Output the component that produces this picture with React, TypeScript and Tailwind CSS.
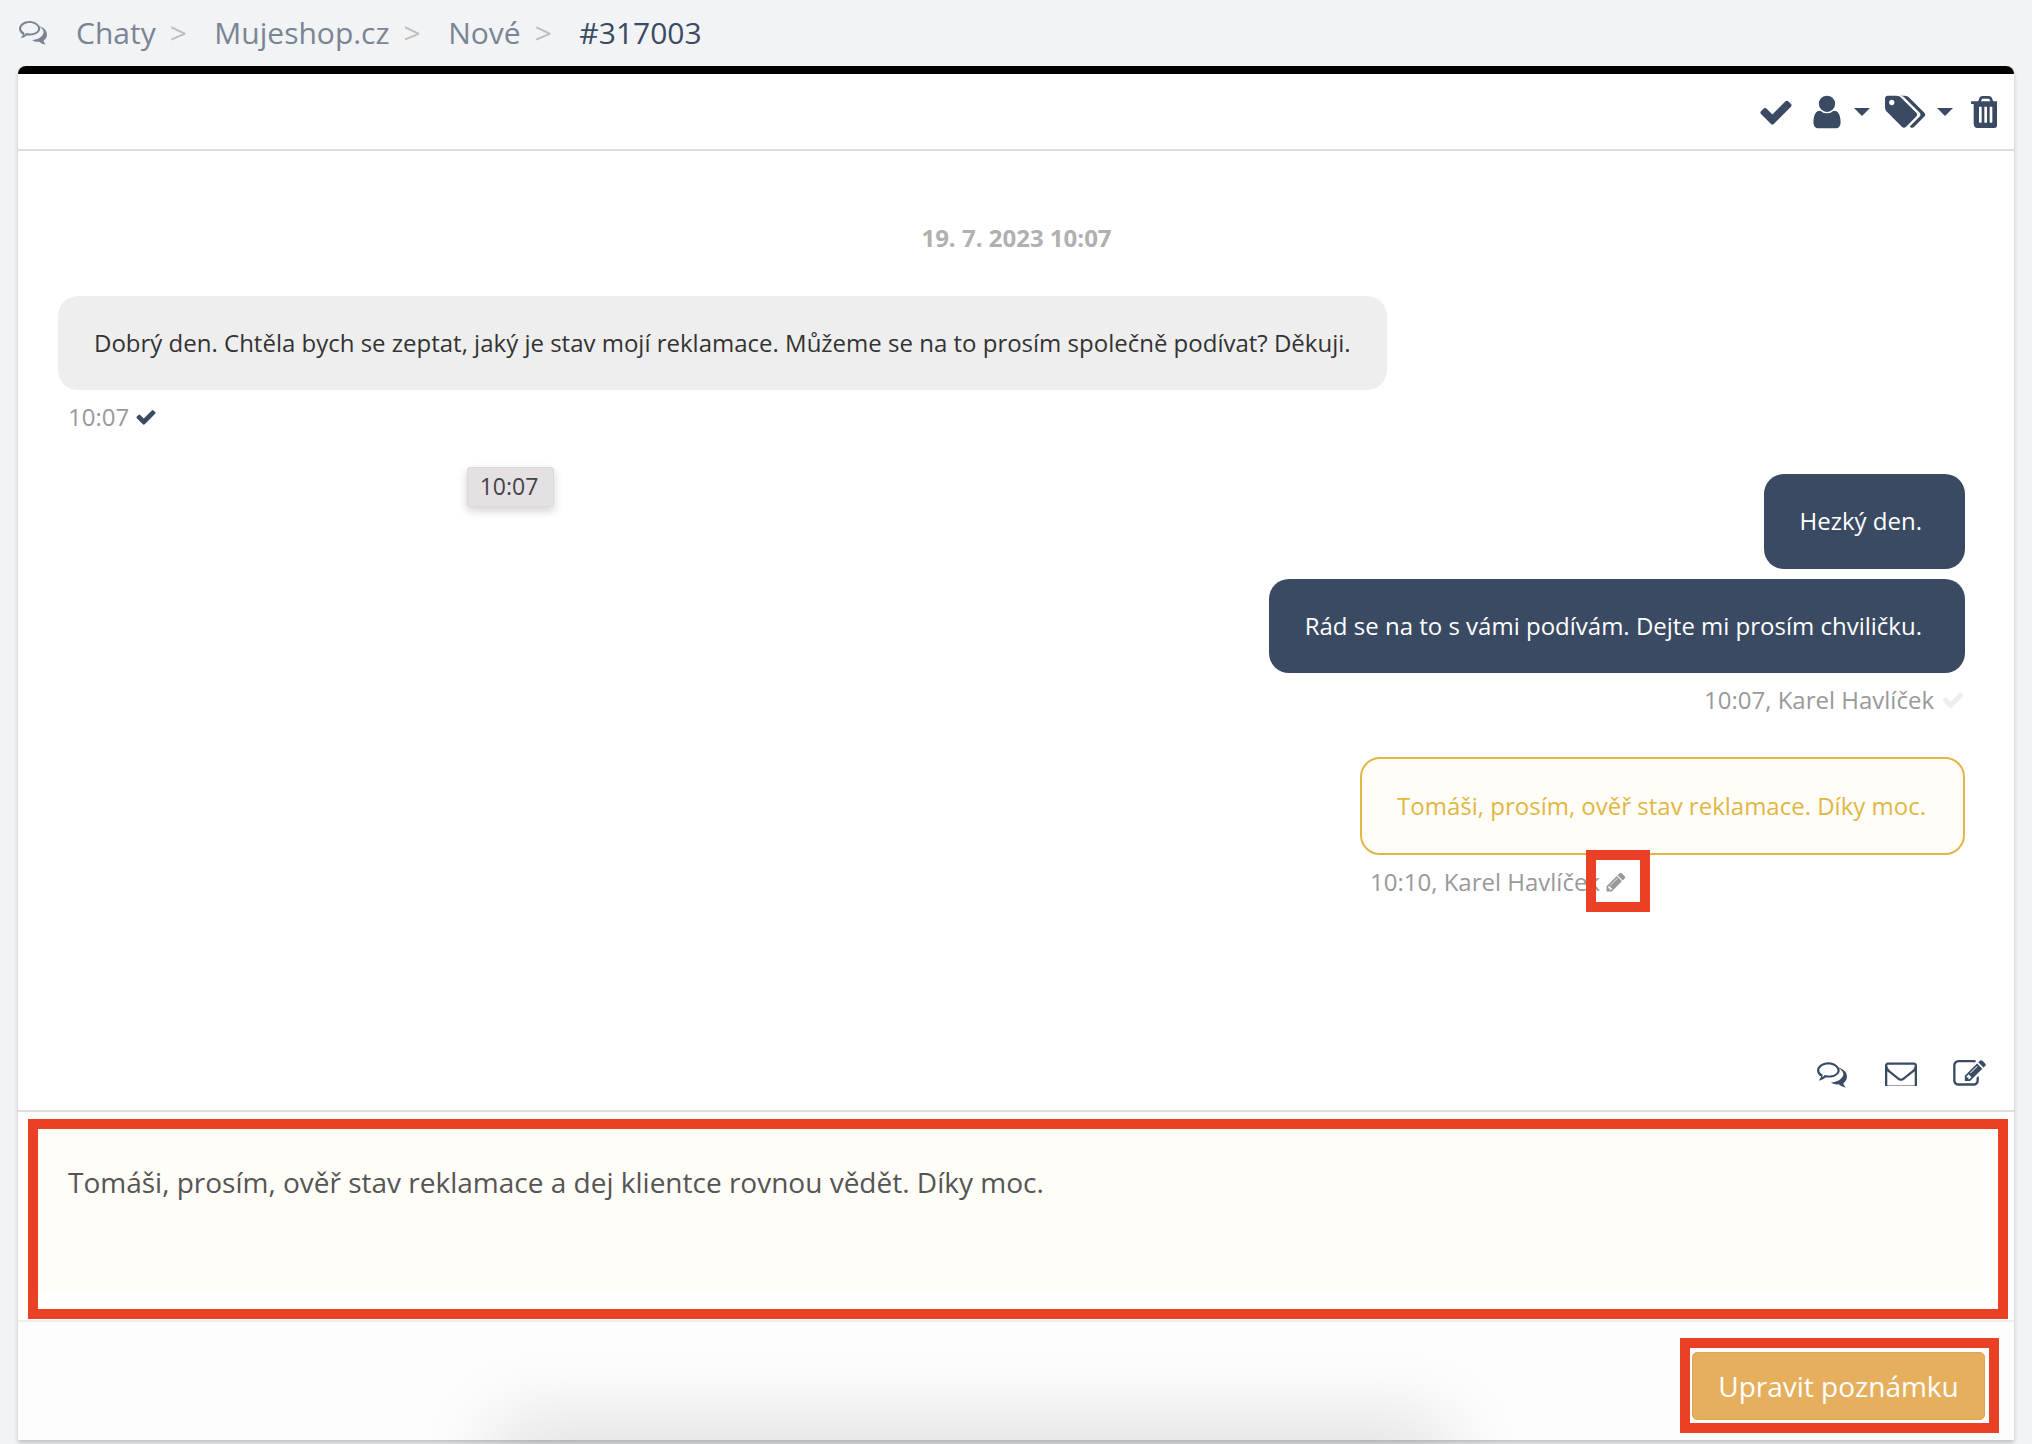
import React from 'react';

const FONT = "font-['Open_Sans','Noto_Sans',sans-serif]";

const Fa = ({ d, className, box = '0 0 1792 1792' }: { d: string; className?: string; box?: string }) => (
  <svg viewBox={box} className={className} fill="currentColor" aria-hidden="true">
    <path d={d} />
  </svg>
);

const CHECK = 'M1671 566q0 40-28 68l-724 724-136 136q-28 28-68 28t-68-28l-136-136-362-362q-28-28-28-68t28-68l136-136q28-28 68-28t68 28l294 295 656-657q28-28 68-28t68 28l136 136q28 28 28 68z';
const USER = 'M1536 1399q0 109-62.5 187t-150.5 78h-854q-88 0-150.5-78t-62.5-187q0-85 8.5-160.5t31.5-152 58.5-131 94-89 134.5-34.5q131 128 313 128t313-128q76 0 134.5 34.5t94 89 58.5 131 31.5 152 8.5 160.5zm-256-887q0 159-112.5 271.5t-271.5 112.5-271.5-112.5-112.5-271.5 112.5-271.5 271.5-112.5 271.5 112.5 112.5 271.5z';
const TAGS = 'M448 448q0-53-37.5-90.5t-90.5-37.5-90.5 37.5-37.5 90.5 37.5 90.5 90.5 37.5 90.5-37.5 37.5-90.5zm1067 576q0 53-37 90l-491 492q-39 37-91 37-53 0-90-37l-715-716q-38-37-64.5-101t-26.5-117v-416q0-52 38-90t90-38h416q53 0 117 26.5t102 64.5l715 714q37 39 37 91zm384 0q0 53-37 90l-491 492q-39 37-91 37-36 0-59-14t-53-45l470-470q37-37 37-90 0-52-37-91l-715-714q-38-38-102-64.5t-117-26.5h224q53 0 117 26.5t102 64.5l715 714q37 39 37 91z';
const TRASH = 'M704 1376v-704q0-14-9-23t-23-9h-64q-14 0-23 9t-9 23v704q0 14 9 23t23 9h64q14 0 23-9t9-23zm256 0v-704q0-14-9-23t-23-9h-64q-14 0-23 9t-9 23v704q0 14 9 23t23 9h64q14 0 23-9t9-23zm256 0v-704q0-14-9-23t-23-9h-64q-14 0-23 9t-9 23v704q0 14 9 23t23 9h64q14 0 23-9t9-23zm-544-992h448l-48-117q-7-9-17-11h-317q-10 2-17 11zm928 32v64q0 14-9 23t-23 9h-96v948q0 83-47 143.5t-113 60.5h-832q-66 0-113-58.5t-47-141.5v-952h-96q-14 0-23-9t-9-23v-64q0-14 9-23t23-9h309l70-167q15-37 54-63t79-26h320q40 0 79 26t54 63l70 167h309q14 0 23 9t9 23z';
const PENCIL = 'M491 1536l91-91-235-235-91 91v107h128v128h107zm523-928q0-22-22-22-10 0-17 7l-542 542q-7 7-7 17 0 22 22 22 10 0 17-7l542-542q7-7 7-17zm-54-192l416 416-832 832h-416v-416zm683 96q0 53-37 90l-166 166-416-416 166-165q36-38 90-38 53 0 91 38l235 234q37 39 37 91z';
const ENVELOPE = 'M1664 1504v-768q-32 36-69 66-268 206-426 338-51 43-83 67t-86.5 48.5-102.5 24.5h-2q-48 0-102.5-24.5t-86.5-48.5-83-67q-158-132-426-338-37-30-69-66v768q0 13 9.5 22.5t22.5 9.5h1472q13 0 22.5-9.5t9.5-22.5zm0-1051v-24.5l-.5-13-3-12.5-5.5-9-9-7.5-14-2.5h-1472q-13 0-22.5 9.5t-9.5 22.5q0 168 147 284 193 152 401 317 6 5 35 29.5t46 37.5 44.5 31.5 50.5 27.5 43 9h2q20 0 43-9t50.5-27.5 44.5-31.5 46-37.5 35-29.5q208-165 401-317 54-43 100.5-115.5t46.5-131.5zm128-37v1088q0 66-47 113t-113 47h-1472q-66 0-113-47t-47-113v-1088q0-66 47-113t113-47h1472q66 0 113 47t47 113z';
const EDIT = 'M888 1184l116-116-152-152-116 116v56h96v96h56zm440-720q-16-16-33 1l-350 350q-17 17-1 33t33-1l350-350q17-17 1-33zm80 594v190q0 119-84.5 203.5t-203.5 84.5h-832q-119 0-203.5-84.5t-84.5-203.5v-832q0-119 84.5-203.5t203.5-84.5h832q63 0 117 25 15 7 18 23 3 17-9 29l-49 49q-14 14-32 8-23-6-45-6h-832q-66 0-113 47t-47 113v832q0 66 47 113t113 47h832q66 0 113-47t47-113v-126q0-13 9-22l64-64q15-15 35-7t20 29zm-96-738l288 288-672 672h-288v-288zm444 132l-92 92-288-288 92-92q28-28 68-28t68 28l152 152q28 28 28 68t-28 68z';

// outlined bubble in front, solid one peeking out behind it
const Comments = ({ className }: { className?: string }) => (
  <svg viewBox="0 0 32 26" className={className} fill="currentColor" aria-hidden="true">
    <path d="M21 6c3 1 9 3 9 9 0 3-1.500 5-3.500 6.500.3 1.500 1.200 3 2.500 4-3-.3-5.500-1.500-7-3-2.500.3-5.500-.2-7.500-1.800 6-.2 11-3 12-7.700.4-2.500-2.500-5-5.500-7z" />
    <path fillRule="evenodd" d="M12 1C5.900 1 1 4.600 1 9c0 2.500 1.500 4.600 3.900 6-.3 1.300-1.100 2.600-2.400 3.700 2.700-.2 5-1.200 6.600-2.900.9.200 1.900.2 2.900.2 6.100 0 11-3.200 11-7S18.100 1 12 1zm0 2.200c4.900 0 8.800 2.600 8.800 5.800s-3.900 5-8.800 5c-1 0-2-.1-3.500-.4-.8.900-1.600 1.500-2.500 2 .3-.8.400-1.500.4-2.600C4.500 11.900 3.200 10.600 3.200 9c0-3.200 3.900-5.800 8.800-5.800z" />
  </svg>
);

const Caret = () => <span className="w-0 h-0 border-x-[8px] border-x-transparent border-t-[8px] border-t-[#3a4a63]" />;

const Crumb = ({ label }: { label: string }) => (
  <>
    <span className="text-[#7a8594]">{label}</span>
    <span className="text-[#bdbdbd] ml-[14px] mr-[27.5px] text-[30px]">&gt;</span>
  </>
);

const App: React.FC = () => {
  return (
    <div className={`${FONT} h-[1444px] w-[2032px] overflow-hidden bg-[#f1f3f5] flex flex-col`}>
      <div className="h-[66px] shrink-0 pl-[18px] flex items-center pb-[2px] text-[30px]">
        <Comments className="w-[31px] h-[25px] text-[#7a8594] mr-[27px]" />
        <Crumb label="Chaty" />
        <Crumb label="Mujeshop.cz" />
        <Crumb label="Nové" />
        <span className="text-[#3a4a63]">#317003</span>
      </div>

      <div className="mx-[18px] h-[1374px] shrink-0 bg-white border-t-[8px] border-black rounded-t-lg shadow-[0_3px_4px_rgba(0,0,0,0.2)] flex flex-col relative">
        <div className="h-[77px] shrink-0 border-b-2 border-[#dedede] flex items-center justify-end pr-[17px] text-[#3a4a63]">
          <Fa d={CHECK} className="w-[36px] h-[36px] mr-[14px]" />
          <Fa d={USER} className="w-[38px] h-[38px] mr-[8px]" />
          <Caret />
          <Fa d={TAGS} box="0 0 1984 1792" className="w-[42px] h-[38px] ml-[15px] mr-[10px]" />
          <Caret />
          <Fa d={TRASH} box="128 128 1280 1536" className="w-[28px] h-[32px] ml-[16px]" />
        </div>

        <div className="flex-1 flex flex-col relative pl-[40px] pr-[49px] text-[24px] leading-[32px]">
          <div className="text-center font-bold text-[#b0b0b0] mt-[71px] ml-[10px]">19. 7. 2023 10:07</div>

          <div className="mt-[42px] self-start rounded-[20px] bg-[#eeeeee] text-[#333333] h-[94px] flex items-center px-[36px] whitespace-nowrap">
            Dobrý den. Chtěla bych se zeptat, jaký je stav mojí reklamace. Můžeme se na to prosím společně podívat? Děkuji.
          </div>
          <div className="mt-[11px] ml-[10px] flex items-center text-[#999999]">
            10:07
            <Fa d={CHECK} className="w-[22px] h-[22px] ml-[6px] text-[#3a4a63]" />
          </div>

          <div className="absolute left-[449px] top-[316px] h-[40px] w-[87px] flex items-center justify-center pr-[3px] pb-[2px] rounded-[3px] bg-[#e4e0e4] border border-[#dcd8dc] text-[#444444] text-[23px] shadow-[0_4px_10px_rgba(0,0,0,0.18)]">
            10:07
          </div>

          <div className="mt-[41px] self-end rounded-[20px] bg-[#3a4a63] text-white h-[95px] flex items-center pl-[36px] pr-[43px] pb-[2px] whitespace-nowrap">
            Hezký den.
          </div>
          <div className="mt-[10px] self-end rounded-[20px] bg-[#3a4a63] text-white h-[94px] flex items-center pl-[36px] pr-[43px] whitespace-nowrap">
            Rád se na to s vámi podívám. Dejte mi prosím chviličku.
          </div>
          <div className="mt-[11px] self-end flex items-center text-[#999999]">
            10:07, Karel Havlíček
            <Fa d={CHECK} className="w-[24px] h-[24px] ml-[7px] text-[#eeeeee]" />
          </div>

          <div className="mt-[41px] self-end rounded-[20px] bg-[#fffdf7] border-2 border-[#e2b645] text-[#e2b645] h-[98px] flex items-center pl-[35px] pr-[37px] whitespace-nowrap">
            Tomáši, prosím, ověř stav reklamace. Díky moc.
          </div>
          <div className="mt-[11px] ml-[1312px] flex items-center text-[#999999] relative whitespace-nowrap">
            10:10, Karel Havlíček
            <Fa d={PENCIL} className="w-[22px] h-[22px] ml-[5px] text-[#999999]" />
            <span className="absolute left-[216px] top-[-16px] w-[64px] h-[62px] border-[10px] border-[#ea4025]" />
          </div>

          <div className="absolute right-[28px] bottom-[22px] flex items-center gap-[36px] text-[#3a4a63]">
            <Comments className="w-[33px] h-[27px]" />
            <Fa d={ENVELOPE} box="0 256 1792 1280" className="w-[32px] h-[24px]" />
            <Fa d={EDIT} box="0 128 1792 1536" className="w-[33px] h-[28px]" />
          </div>
        </div>

        <div className="h-[210px] shrink-0 border-t-2 border-[#dedede] pl-[10px] pr-[6px] pt-[7px]">
          <div className="h-[200px] border-[10px] border-[#ea4025] bg-white pr-[13px]">
            <div className="h-[163px] bg-[#fffdf7] pl-[30px] pt-[35px] text-[28px] leading-[36px] text-[#555555]">
              Tomáši, prosím, ověř stav reklamace a dej klientce rovnou vědět. Díky moc.
            </div>
          </div>
        </div>

        <div className="h-[120px] shrink-0 border-t-2 border-[#eeeeee] bg-[#fdfdfd] relative flex justify-end items-start pt-[16px] pr-[15px]">
          <div className="absolute left-[499px] right-[588px] bottom-[-44px] h-[40px] shadow-[0_0_80px_24px_rgba(0,0,0,0.12)]" />
          <div className="relative border-[10px] border-[#ea4025] bg-white pl-[2px] pr-[4px] pt-[4px] pb-[3px]">
            <button
              type="button"
              className="block h-[68px] w-[293px] rounded-[5px] bg-[#e5af5d] border border-[#dfa552] text-white text-[28px]"
            >
              Upravit poznámku
            </button>
          </div>
        </div>
      </div>
    </div>
  );
};

export default App;
